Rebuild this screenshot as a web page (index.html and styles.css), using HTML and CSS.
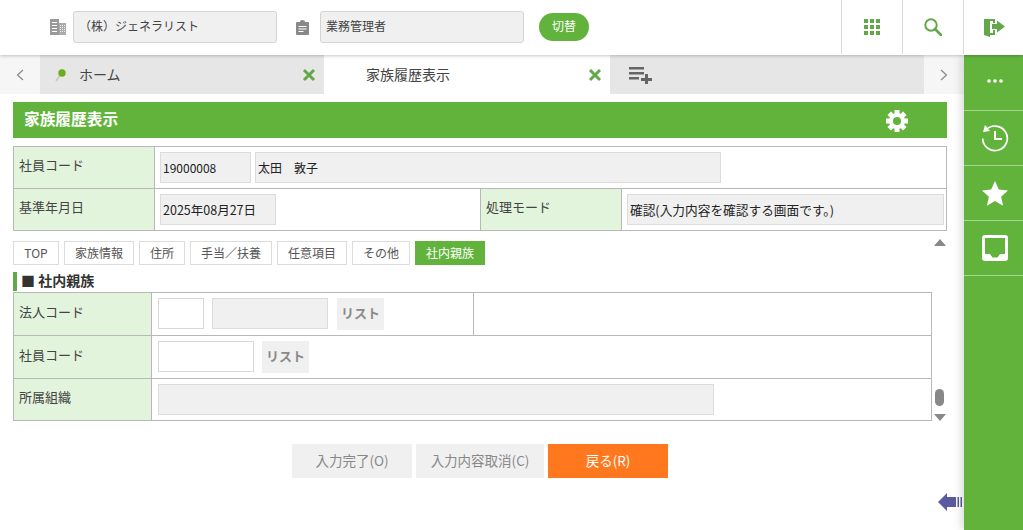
FILE: index.html
```html
<!DOCTYPE html>
<html lang="ja">
<head>
<meta charset="utf-8">
<title>家族履歴表示</title>
<link rel="stylesheet" href="styles.css">
</head>
<body>
<header class="header">
  <svg class="org-icon" viewBox="0 0 16 16" width="16" height="16"><path fill="#999" d="M0 0h9v16H0z"/><path fill="#fff" d="M2 3h5v1H2zM2 6h5v1H2zM2 9h5v1H2zM2 12h5v1H2z"/><path fill="#aaa" d="M9 4h7v12H9z"/><path fill="#eee" d="M10 6h1v1h-1zM12 6h1v1h-1zM14 6h1v1h-1zM10 8h1v1h-1zM12 8h1v1h-1zM14 8h1v1h-1zM10 10h1v1h-1zM12 10h1v1h-1zM14 10h1v1h-1zM10 12h1v1h-1zM12 12h1v1h-1zM14 12h1v1h-1z"/></svg>
  <div class="head-field head-org">（株）ジェネラリスト</div>
  <svg class="role-icon" viewBox="0 0 13 15" width="13" height="15"><path fill="#888" d="M1 2h3V1.500a2.500 1.500 0 0 1 5 0V2h3a1 1 0 0 1 1 1v11a1 1 0 0 1-1 1H1a1 1 0 0 1-1-1V3a1 1 0 0 1 1-1z"/><path fill="#fff" d="M2.500 6h8v1h-8zM2.500 8.500h8v1h-8zM2.500 11h5v1h-5z"/></svg>
  <div class="head-field head-role">業務管理者</div>
  <button class="switch-btn">切替</button>
  <nav class="head-actions">
    <div class="head-cell">
      <svg viewBox="0 0 16 16" width="16" height="16"><path fill="#62a84a" d="M0 0h4v4H0zM6 0h4v4H6zM12 0h4v4h-4zM0 6h4v4H0zM6 6h4v4H6zM12 6h4v4h-4zM0 12h4v4H0zM6 12h4v4H6zM12 12h4v4h-4z"/></svg>
    </div>
    <div class="head-cell">
      <svg viewBox="0 0 18 18" width="18" height="18"><circle cx="7" cy="7" r="5.700" fill="none" stroke="#62a84a" stroke-width="2"/><path d="M11 11l6 6" stroke="#62a84a" stroke-width="2.600" stroke-linecap="round"/></svg>
    </div>
    <div class="head-cell head-cell-last">
      <svg viewBox="0 0 21 19" width="21" height="19"><path fill="#62a84a" d="M0 1h11v4H9V3H6v12h3v-3h2v5H6v2l-6-2z"/><path fill="#62a84a" d="M8 6h5V2.500L21 8.500l-8 6V11H8z"/></svg>
    </div>
  </nav>
</header>

<div class="body-row">
  <main class="content">
    <div class="tabs">
      <div class="tab-nav"><svg viewBox="0 0 8 12" width="8" height="12"><path d="M7 1L1.500 6 7 11" fill="none" stroke="#888" stroke-width="1.200"/></svg></div>
      <div class="tab tab-home">
        <svg class="pin" viewBox="0 0 12 14" width="12" height="14"><path d="M5 7L1 13" stroke="#c8c8b8" stroke-width="1.500"/><circle cx="7" cy="5" r="3.700" fill="#6aae1e"/></svg>
        <span class="tab-label">ホーム</span>
        <svg class="tab-close" viewBox="0 0 14 14" width="14" height="14"><path d="M2 2l10 10M12 2L2 12" stroke="#62a84a" stroke-width="3"/></svg>
      </div>
      <div class="tab tab-active">
        <span class="tab-label">家族履歴表示</span>
        <svg class="tab-close" viewBox="0 0 14 14" width="14" height="14"><path d="M2 2l10 10M12 2L2 12" stroke="#62a84a" stroke-width="3"/></svg>
      </div>
      <div class="tab tab-add">
        <svg viewBox="0 0 24 18" width="24" height="18"><path fill="#666" d="M0 1h15v2.500H0zM0 6h15v2.500H0zM0 11h10v2.500H0zM16 8h3v4h4v3h-4v3h-3v-3h-4v-3h4z"/></svg>
      </div>
      <div class="tab-nav"><svg viewBox="0 0 8 12" width="8" height="12"><path d="M1 1l5.500 5L1 11" fill="none" stroke="#888" stroke-width="1.200"/></svg></div>
    </div>

    <div class="page">
      <div class="title-bar">
        <h1 class="title">家族履歴表示</h1>
        <svg class="gear" viewBox="0 0 24 24" width="24" height="24"><path d="M12 1v22M1 12h22M4.200 4.200l15.600 15.600M19.800 4.200L4.200 19.800" stroke="#fff" stroke-width="5"/><circle cx="12" cy="12" r="8" fill="#fff"/><circle cx="12" cy="12" r="4" fill="#62b33c"/></svg>
      </div>

      <table class="grid grid-top">
        <colgroup><col class="c-label"><col class="c-mid"><col class="c-label"><col></colgroup>
        <tr>
          <th>社員コード</th>
          <td colspan="3"><div class="row-fields"><span class="field f-code">19000008</span><span class="field f-name">太田　敦子</span></div></td>
        </tr>
        <tr>
          <th>基準年月日</th>
          <td><span class="field f-date">2025年08月27日</span></td>
          <th>処理モード</th>
          <td><span class="field f-mode">確認(入力内容を確認する画面です。)</span></td>
        </tr>
      </table>

      <div class="scroll-area">
        <div class="scroll-body">
          <div class="anchors">
            <a class="anchor">TOP</a>
            <a class="anchor">家族情報</a>
            <a class="anchor">住所</a>
            <a class="anchor">手当／扶養</a>
            <a class="anchor">任意項目</a>
            <a class="anchor">その他</a>
            <a class="anchor anchor-on">社内親族</a>
          </div>
          <h2 class="section">■ 社内親族</h2>
          <table class="grid grid-sub">
            <colgroup><col class="c-sublabel"><col class="c-submid"><col></colgroup>
            <tr>
              <th>法人コード</th>
              <td><div class="row-fields row-corp"><span class="input f-corp"></span><span class="field f-corpname"></span><span class="list-btn">リスト</span></div></td>
              <td></td>
            </tr>
            <tr>
              <th>社員コード</th>
              <td colspan="2"><div class="row-fields row-emp"><span class="input f-emp"></span><span class="list-btn">リスト</span></div></td>
            </tr>
            <tr class="row-last">
              <th>所属組織</th>
              <td colspan="2"><span class="field f-org"></span></td>
            </tr>
          </table>
        </div>
        <div class="scrollbar">
          <span class="arrow-up"></span>
          <span class="thumb"></span>
          <span class="arrow-down"></span>
        </div>
      </div>

      <div class="actions">
        <button class="act act-a">入力完了(O)</button>
        <button class="act act-b">入力内容取消(C)</button>
        <button class="act act-back">戻る(R)</button>
      </div>
    </div>
    <svg class="side-toggle" viewBox="0 0 25 20" width="25" height="20"><path fill="#5a5aa0" d="M0 10L9 1v4h9v10H9v4z"/><path fill="#5a5aa0" d="M19.500 5h1.500v10h-1.500zM22.500 5h1.500v10h-1.500z"/></svg>
  </main>

  <aside class="sidebar">
    <div class="side-item side-first">
      <svg viewBox="0 0 16 4" width="16" height="4"><circle cx="2" cy="2" r="1.800" fill="#fff"/><circle cx="8" cy="2" r="1.800" fill="#fff"/><circle cx="14" cy="2" r="1.800" fill="#fff"/></svg>
    </div>
    <div class="side-item">
      <svg viewBox="0 0 28 28" width="28" height="28"><path d="M4.500 6.500A12.300 12.300 0 1 1 1.700 14.500" fill="none" stroke="#fff" stroke-width="1.700"/><path fill="#fff" d="M4 1l5 6-7 1z"/><path d="M14 7v8h7" fill="none" stroke="#fff" stroke-width="2"/></svg>
    </div>
    <div class="side-item">
      <svg viewBox="0 0 26 25" width="26" height="25"><path fill="#fff" d="M13 0l3.800 8.500 9.200 1-6.900 6.200 2 9.100-8.100-4.700-8.100 4.700 2-9.100L0 9.500l9.200-1z"/></svg>
    </div>
    <div class="side-item">
      <svg viewBox="0 0 26 26" width="26" height="26"><path fill="#fff" fill-rule="evenodd" d="M3 0h20a3 3 0 0 1 3 3v20a3 3 0 0 1-3 3H3a3 3 0 0 1-3-3V3a3 3 0 0 1 3-3zM3 3v16h5l2.500 3.500h5L18 19h5V3z"/></svg>
    </div>
  </aside>
</div>
</body>
</html>
```

FILE: styles.css
```css
* { box-sizing: border-box; }

html, body {
  margin: 0;
  padding: 0;
}

body {
  width: 1023px;
  height: 530px;
  overflow: hidden;
  background: #fff;
  color: #333;
  font-family: "Noto Sans CJK JP", "Noto Sans", sans-serif;
  font-size: 13px;
}

/* header */
.header {
  position: relative;
  z-index: 2;
  display: flex;
  align-items: center;
  height: 55px;
  padding-left: 50px;
  background: #fff;
  box-shadow: 0 1px 3px rgba(0, 0, 0, .22);
}

.org-icon { margin-top: -2px; margin-right: 7px; }
.role-icon { margin: -1px 11px 0 19px; }

.head-field {
  height: 32px;
  line-height: 28px;
  background: #f0f0f0;
  border: 1px solid #d4d4d4;
  border-radius: 3px;
  margin-top: -1px;
  color: #444;
  font-size: 12px;
}

.head-org { width: 204px; padding-left: 5px; }
.head-role { width: 204px; padding-left: 5px; }

.switch-btn {
  width: 50px;
  height: 28px;
  margin: -1px 0 0 15px;
  padding: 0 0 3px;
  border: 0;
  border-radius: 14px;
  background: #62b33c;
  color: #fff;
  font: inherit;
  font-size: 12px;
}

.head-actions {
  display: flex;
  align-self: stretch;
  margin-left: auto;
}

.head-cell {
  display: flex;
  align-items: center;
  justify-content: center;
  width: 61px;
  height: 54px;
  border-left: 1px solid #d9d9d9;
}

.head-cell-last { width: 60px; padding-left: 2px; }

/* layout */
.body-row {
  display: flex;
  height: 475px;
}

.content {
  position: relative;
  width: 964px;
}

.sidebar {
  width: 59px;
  background: #62b33c;
  box-shadow: -3px 0 8px rgba(0, 0, 0, .14);
  position: relative;
}

.side-item {
  display: flex;
  align-items: center;
  justify-content: center;
  height: 55px;
  padding-left: 3px;
  border-bottom: 1px solid #a5d58f;
}

.side-first { height: 56px; padding-bottom: 3px; }

/* tabs */
.tabs {
  display: flex;
  height: 39px;
}

.tab-nav {
  display: flex;
  align-items: center;
  justify-content: center;
  width: 40px;
  background: #f6f6f6;
}

.tab {
  display: flex;
  align-items: center;
  height: 39px;
  font-size: 14px;
  color: #444;
}

.tab-label { margin-top: -2px; }

.tab-home { width: 284px; padding-left: 15px; background: #e6e6e6; }
.tab-active { width: 286px; padding-left: 42px; background: #fff; }
.tab-add { flex: 1; padding-left: 19px; background: #e6e6e6; }

.pin { margin-right: 12px; }
.tab-close { margin-left: auto; margin-right: 8px; }

/* page */
.page {
  padding: 8px 17px 0 13px;
}

.title-bar {
  display: flex;
  align-items: center;
  justify-content: space-between;
  height: 36px;
  padding: 0 38px 0 11px;
  background: #62b33c;
}

.title {
  margin: 0 0 4px;
  color: #fff;
  font-size: 15.700px;
  font-weight: 700;
}

.gear { margin-top: 1px; }

/* tables */
.grid {
  width: 100%;
  border-collapse: collapse;
  table-layout: fixed;
}

.grid th, .grid td {
  border: 1px solid #b8b8b8;
  padding: 0 0 0 5px;
  vertical-align: middle;
}

.grid th {
  background: #e2f4dc;
  font-weight: 400;
  text-align: left;
  padding-left: 5px;
  color: #444;
  font-size: 13px;
}

.grid-top { margin-top: 8px; }
.grid-top tr { height: 42px; }
.grid-top th { padding-bottom: 6px; }
.c-label { width: 141px; }
.c-mid { width: 326px; }

.grid-sub tr { height: 43px; }
.grid-sub tr.row-last { height: 42px; }
.grid-sub td { padding-left: 6px; }
.grid-sub th { padding-bottom: 5px; }
.grid-sub .row-last th { padding-bottom: 7px; }
.c-sublabel { width: 138px; }
.c-submid { width: 322px; }

.row-fields {
  display: flex;
  align-items: flex-start;
}

.field, .input {
  display: block;
  height: 31px;
  line-height: 29px;
  color: #222;
  font-size: 12px;
  white-space: nowrap;
}

.field {
  background: #f0f0f0;
  border: 1px solid #dcdcdc;
  padding-left: 2px;
}

.input {
  background: #fff;
  border: 1px solid #d8d8d8;
}

.f-code { width: 91px; margin-right: 4px; }
.f-name { width: 466px; }
.f-date { width: 116px; font-size: 12.500px; }
.f-mode { width: 317px; font-size: 12.700px; }
.f-corp { width: 46px; margin-right: 8px; }
.f-corpname { width: 116px; margin-right: 9px; }
.f-emp { width: 96px; margin-right: 8px; }
.f-org { width: 556px; }

.list-btn {
  display: block;
  width: 47px;
  height: 32px;
  line-height: 29px;
  background: #f0f0f0;
  color: #8a8a8a;
  font-size: 13px;
  font-weight: 700;
  text-align: center;
}

/* scroll area */
.scroll-area {
  display: flex;
  margin-top: 10px;
}

.scroll-body { width: 919px; }

.scrollbar {
  display: flex;
  flex-direction: column;
  align-items: center;
  width: 15px;
  height: 182px;
  margin-top: -2px;
}

.arrow-up, .arrow-down {
  display: block;
  width: 0;
  height: 0;
  border-left: 6px solid transparent;
  border-right: 6px solid transparent;
}

.arrow-up { border-bottom: 7px solid #888; }
.arrow-down { margin-top: 8px; border-top: 7px solid #888; }

.thumb {
  display: block;
  width: 9px;
  height: 17px;
  margin-top: auto;
  border-radius: 5px;
  background: #888;
}

.anchors {
  display: flex;
  gap: 5px;
}

.anchor {
  display: block;
  height: 24px;
  line-height: 22px;
  padding: 0 10px;
  background: #fff;
  border: 1px solid #dcdcdc;
  color: #555;
  font-size: 12px;
  text-align: center;
}

.anchor:nth-child(1) { width: 46px; }
.anchor:nth-child(2) { width: 70px; }
.anchor:nth-child(3) { width: 46px; }
.anchor:nth-child(4) { width: 82px; }
.anchor:nth-child(5) { width: 70px; }
.anchor:nth-child(6) { width: 58px; }
.anchor:nth-child(7) { width: 70px; }

.anchor-on {
  background: #62b33c;
  border-color: #62b33c;
  color: #fff;
}

.section {
  height: 19px;
  margin: 7px 0 1px;
  padding-left: 4px;
  border-left: 4px solid #62a84a;
  color: #333;
  font-size: 14px;
  font-weight: 700;
  line-height: 17px;
}

/* actions */
.actions {
  display: flex;
  justify-content: center;
  gap: 4px;
  margin-top: 23px;
  width: 938px;
  margin-left: -2px;
}

.act {
  height: 34px;
  padding: 0 0 2px;
  border: 0;
  background: #f0f0f0;
  color: #888;
  font: inherit;
  font-size: 13.500px;
}

.act-a { width: 120px; }
.act-b { width: 128px; }
.act-back { width: 120px; background: #ff781e; color: #fff; }

.side-toggle {
  position: absolute;
  left: 938px;
  bottom: 18px;
}
```
